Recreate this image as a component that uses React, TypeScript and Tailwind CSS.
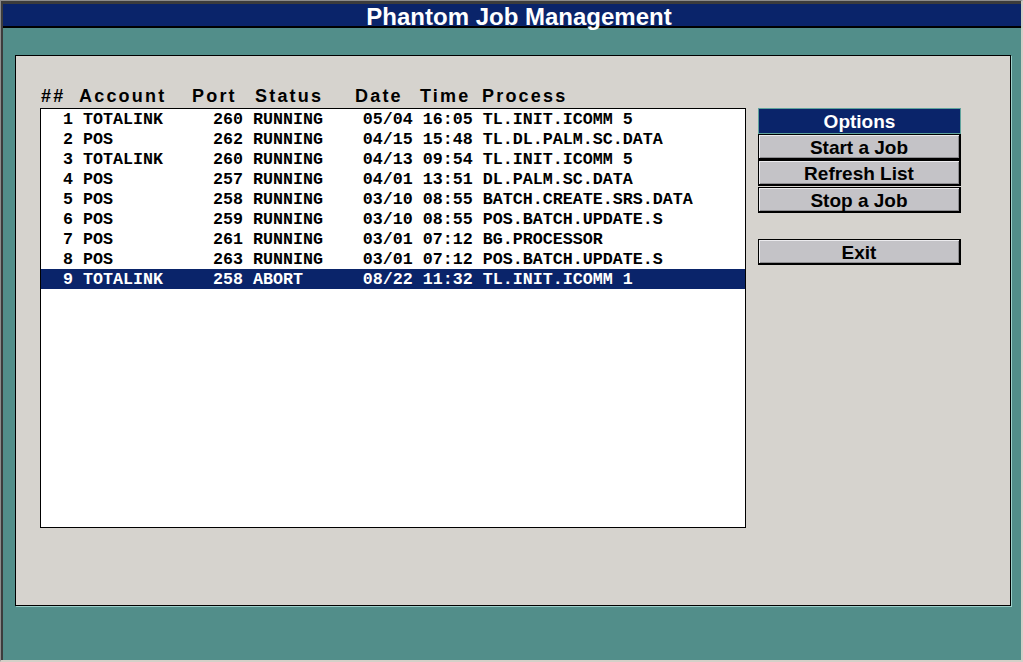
import React from "react";

type Job = {
  n: number;
  account: string;
  port: number;
  status: string;
  date: string;
  time: string;
  process: string;
};

const JOBS: Job[] = [
  { n: 1, account: "TOTALINK", port: 260, status: "RUNNING", date: "05/04", time: "16:05", process: "TL.INIT.ICOMM 5" },
  { n: 2, account: "POS", port: 262, status: "RUNNING", date: "04/15", time: "15:48", process: "TL.DL.PALM.SC.DATA" },
  { n: 3, account: "TOTALINK", port: 260, status: "RUNNING", date: "04/13", time: "09:54", process: "TL.INIT.ICOMM 5" },
  { n: 4, account: "POS", port: 257, status: "RUNNING", date: "04/01", time: "13:51", process: "DL.PALM.SC.DATA" },
  { n: 5, account: "POS", port: 258, status: "RUNNING", date: "03/10", time: "08:55", process: "BATCH.CREATE.SRS.DATA" },
  { n: 6, account: "POS", port: 259, status: "RUNNING", date: "03/10", time: "08:55", process: "POS.BATCH.UPDATE.S" },
  { n: 7, account: "POS", port: 261, status: "RUNNING", date: "03/01", time: "07:12", process: "BG.PROCESSOR" },
  { n: 8, account: "POS", port: 263, status: "RUNNING", date: "03/01", time: "07:12", process: "POS.BATCH.UPDATE.S" },
  { n: 9, account: "TOTALINK", port: 258, status: "ABORT", date: "08/22", time: "11:32", process: "TL.INIT.ICOMM 1" },
];

const SELECTED = 9;

// fixed-width line, like the terminal list it comes from
function line(j: Job) {
  return [
    String(j.n).padStart(2),
    j.account.padEnd(12),
    String(j.port),
    j.status.padEnd(10),
    j.date,
    j.time,
    j.process,
  ].join(" ");
}

function MenuButton({ label, className = "" }: { label: string; className?: string }) {
  return (
    <div
      className={`h-[26px] flex items-center justify-center pt-[1px] bg-[#c4c3c7] border border-black border-r-2 border-b-2 shadow-[inset_1px_1px_0_#ecebee,inset_-1px_-1px_0_#8e8d91] text-[19px] font-bold leading-none text-black ${className}`}
    >
      {label}
    </div>
  );
}

export default function App() {
  return (
    <div className="w-[1023px] h-[662px] flex flex-col border-t border-l border-[#8c8c8c] border-r-2 border-b-2 border-r-[#d4d0c8] border-b-[#d4d0c8] font-['Liberation_Sans',Arial,sans-serif]">
      <div className="flex-1 flex flex-col border-t-[3px] border-l-2 border-[#3c3c3c] bg-[#528e8a]">
        {/* title bar */}
        <div className="h-[24px] flex items-center justify-center pl-[14px] pt-[3px] bg-[#0a246a] border-b-2 border-black">
          <span className="text-white text-[24px] font-bold leading-none">Phantom Job Management</span>
        </div>

        <div className="pt-[27px] pl-[12px] pr-[10px]">
          <div className="h-[551px] bg-[#d6d3ce] border border-black shadow-[1px_1px_0_#9ccfca] pl-[24px] pt-[28px]">
            <div className="flex gap-[12px]">
              <div className="w-[706px]">
                {/* column headings */}
                <div className="h-[22px] mb-[2px] pt-[2px] grid grid-cols-[38px_113px_63px_100px_65px_62px_1fr] pl-[1px] items-center text-[18px] font-bold tracking-[2.2px] leading-none text-black">
                  <span>##</span>
                  <span>Account</span>
                  <span>Port</span>
                  <span>Status</span>
                  <span>Date</span>
                  <span>Time</span>
                  <span>Process</span>
                </div>
                <div className="h-[420px] bg-white border border-black">
                  {JOBS.map((j) => (
                    <div
                      key={j.n}
                      className={`h-[20px] flex items-center pl-[12px] pt-[2px] whitespace-pre font-['Liberation_Mono','Courier_New',monospace] text-[16.67px] font-bold leading-none ${
                        j.n === SELECTED ? "bg-[#0a246a] text-white" : "text-black"
                      }`}
                    >
                      {line(j)}
                    </div>
                  ))}
                </div>
              </div>

              <div className="w-[203px] pt-[24px] flex flex-col">
                <div className="h-[26px] flex items-center justify-center pt-[1px] bg-[#0a246a] border border-[#5fa39d] text-white text-[19px] font-bold leading-none">
                  Options
                </div>
                <MenuButton label="Start a Job" />
                <MenuButton label="Refresh List" />
                <MenuButton label="Stop a Job" className="mt-[1px]" />
                <MenuButton label="Exit" className="mt-[26px]" />
              </div>
            </div>
          </div>
        </div>
      </div>
    </div>
  );
}
